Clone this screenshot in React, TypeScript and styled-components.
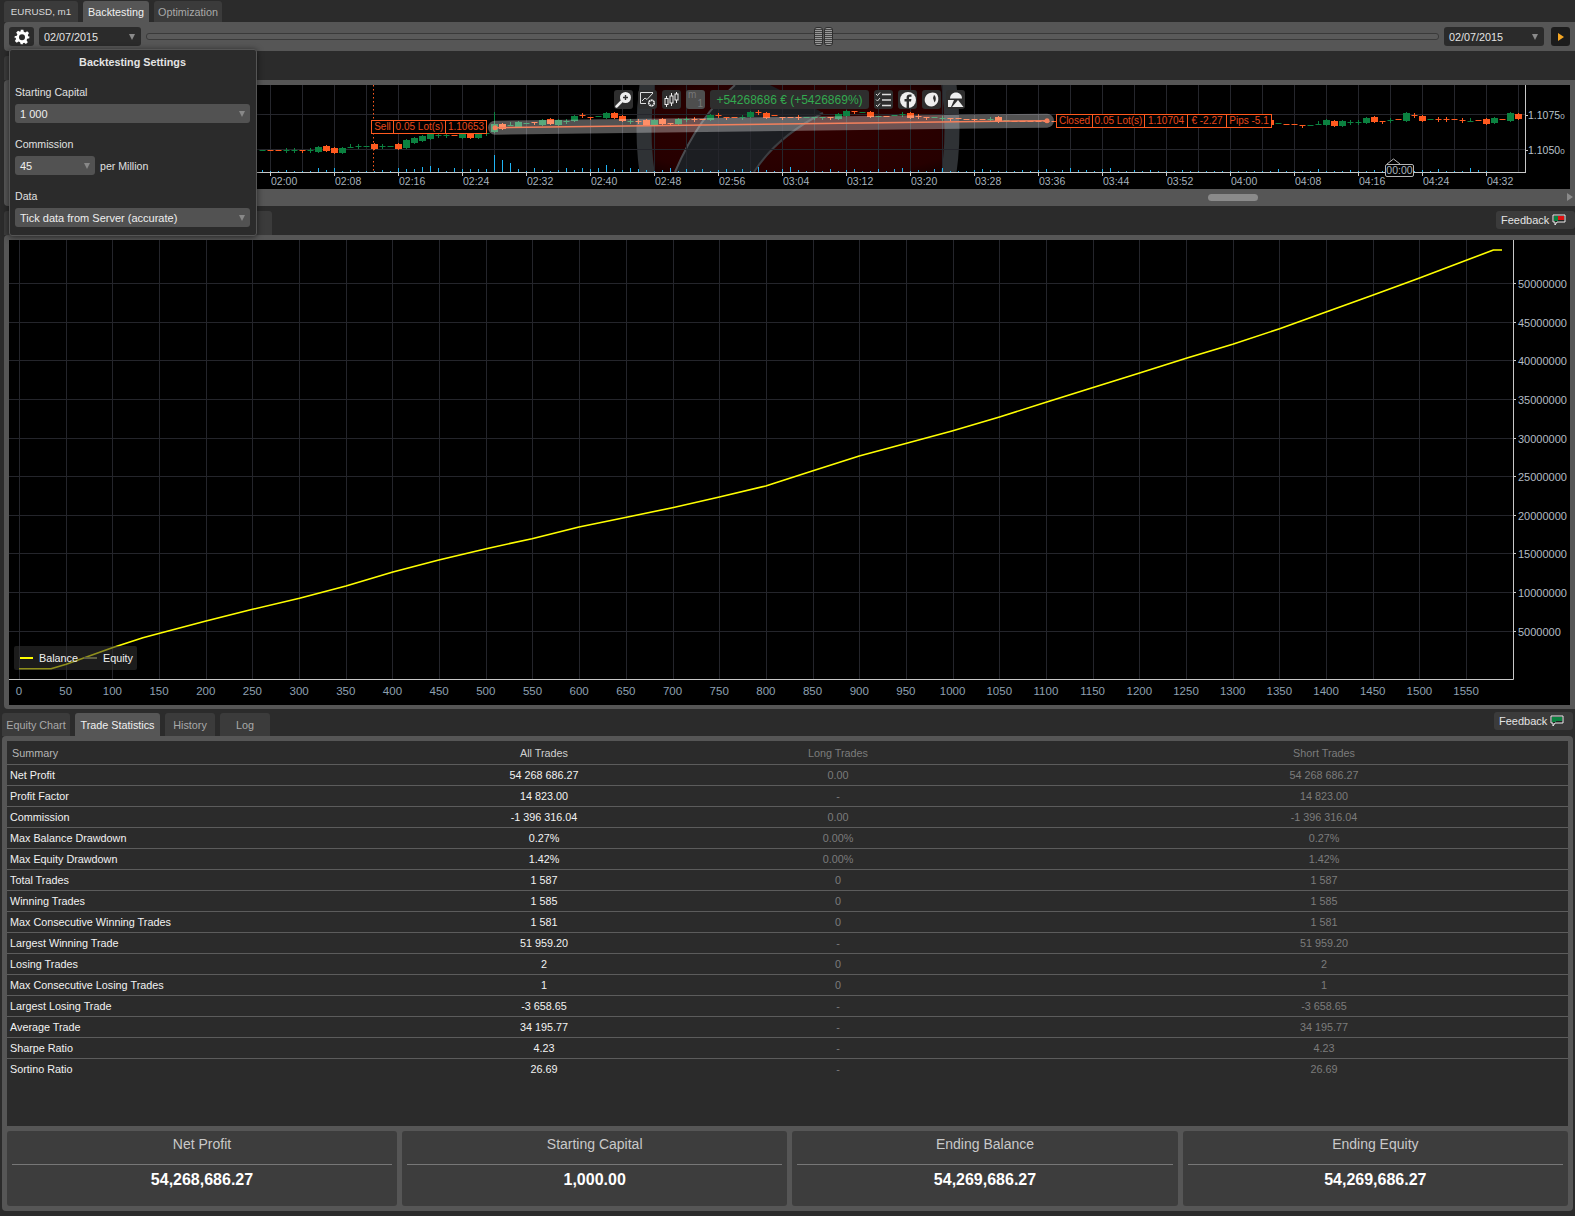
import React from "react";
import styled, { createGlobalStyle } from "styled-components";

const GREEN = "#0b8140";
const ORANGE = "#ff5a1f";

const seq = (start: number, items: string) =>
  items.split(" ").map((s, i) => ({
    x: 270.5 + 8 * (start + i),
    kind: s[0],
    color: s[1] === "g" ? GREEN : ORANGE,
    y: Number(s.slice(2)),
  }));

// kind: b box, t tall box, p plus, d dash, T tee, u up tee
const candles = [
  ...seq(-1, "dg150 do150 do150 pg150 pg150 To150 pg150 bg149 bo148 bo150 bg150 ug147 pg146 dg146 bo146 pg146 dg146 bo146 tg144 bg140 bg138 bg136 pg135 pg135 do135 bg135 bo135 bg135 pg133 tg128 bo126 ug125 bg124 dg123 To122 bg122"),
  ...seq(35, "bo121 bg122 pg121 bg118 po115 To117 dg116 bg115"),
  ...seq(43, "bo115 bo118 pg121 po121 bo122 bg122 bo121 To123 bg121 pg119 po119 do119 bg117 po115 To117 do117 pg117 bg114 po112 bo115 do115 To117 do117 po117 dg117 Tg117 Tg117 To117 bg116 bg113 To111 dg112 bo114 dg116 do116 dg115 pg114 bo115 po116 To117 dg117 pg118 To118 do118 do119 To119 do119 pg119 bo119 dg120 do121 do121 do121 do121 do121 do121"),
  ...seq(125, "bo122 dg123 do124 do124 To125 dg125 ug124 bg122 bo123 bg123 pg122 pg122 bg120 bo119 To121 pg120 do119 tg117 po115 bo118 dg119 po119 po119 do119 po120 ug121 do120 bo121 bg120 do119 tg117 bo116"),
];

const volumes = [
  2, 1, 1, 2, 1, 1, 1, 4, 2, 4, 1, 2, 1, 1, 1, 2, 1, 4, 3, 3, 5, 6, 4, 1, 4, 3, 3, 3, 3, 17, 12, 9, 3, 1, 4, 2, 1,
  2, 4, 2, 4, 3, 4, 7, 3, 2, 4, 3, 2, 1, 2, 4, 1, 3, 2, 3, 1, 2, 3, 2, 3, 1, 5, 2, 1, 3, 5, 2, 1, 1, 1, 3, 1, 2, 3, 1,
  1, 3, 1, 3, 4, 1, 2, 1, 3, 4, 1, 1, 1, 2, 3, 2, 1, 1, 1, 2, 1, 2, 3, 1, 2, 4, 2, 2, 1, 3, 4, 1, 1, 2, 1, 2, 1, 1, 1,
  2, 1, 1, 1, 1, 1, 1, 1, 1, 1, 1, 1, 3, 1, 1, 1, 1, 3, 1, 1, 1, 2, 1, 1, 2, 1, 1, 1, 4, 1, 2, 1, 3, 1, 1, 1, 4, 2, 1,
];

const miniTimes = [
  "02:00", "02:08", "02:16", "02:24", "02:32", "02:40", "02:48", "02:56", "03:04", "03:12",
  "03:20", "03:28", "03:36", "03:44", "03:52", "04:00", "04:08", "04:16", "04:24", "04:32",
];

const curve: [number, number][] = [
  [19, 668.7], [51, 668.7], [66.3, 664.3], [112.2, 647.7], [142.9, 637.7], [159.7, 633.3], [206, 621], [252.6, 609.3],
  [299.5, 598.3], [346, 586], [392.9, 572], [438.8, 560], [486.2, 548.7], [532, 538.7], [579, 527], [626.5, 517.3],
  [672.4, 507.7], [719.4, 497], [765.8, 486], [775, 483], [812.2, 471], [859.2, 456], [906.6, 443.3], [952, 431],
  [999.5, 417], [1046, 402.3], [1092.3, 387.7], [1138.8, 373.3], [1186.2, 358.3], [1232.7, 344.3], [1279.6, 328.7],
  [1326, 312], [1372.5, 295.3], [1418.9, 278.3], [1466.3, 260.3], [1493.4, 250], [1502, 250],
];

const stats: [string, string, string, string][] = [
  ["Net Profit", "54 268 686.27", "0.00", "54 268 686.27"],
  ["Profit Factor", "14 823.00", "-", "14 823.00"],
  ["Commission", "-1 396 316.04", "0.00", "-1 396 316.04"],
  ["Max Balance Drawdown", "0.27%", "0.00%", "0.27%"],
  ["Max Equity Drawdown", "1.42%", "0.00%", "1.42%"],
  ["Total Trades", "1 587", "0", "1 587"],
  ["Winning Trades", "1 585", "0", "1 585"],
  ["Max Consecutive Winning Trades", "1 581", "0", "1 581"],
  ["Largest Winning Trade", "51 959.20", "-", "51 959.20"],
  ["Losing Trades", "2", "0", "2"],
  ["Max Consecutive Losing Trades", "1", "0", "1"],
  ["Largest Losing Trade", "-3 658.65", "-", "-3 658.65"],
  ["Average Trade", "34 195.77", "-", "34 195.77"],
  ["Sharpe Ratio", "4.23", "-", "4.23"],
  ["Sortino Ratio", "26.69", "-", "26.69"],
];

const cards = [
  ["Net Profit", "54,268,686.27"],
  ["Starting Capital", "1,000.00"],
  ["Ending Balance", "54,269,686.27"],
  ["Ending Equity", "54,269,686.27"],
];

const GlobalStyle = createGlobalStyle`
  html, body {
    margin: 0;
    padding: 0;
    background: #2b2b2b;
  }
  * {
    box-sizing: border-box;
  }
  body {
    font-family: "Liberation Sans", Arial, sans-serif;
    font-size: 10.8px;
    color: #ddd;
  }
`;

const Page = styled.div`
  position: relative;
  width: 1575px;
  height: 1216px;
  overflow: hidden;
  background: #2b2b2b;
`;

const TabBar = styled.div<{ $h: number; $left: number; $right?: number }>`
  display: flex;
  align-items: flex-end;
  gap: 5px;
  height: ${(p) => p.$h}px;
  padding-left: ${(p) => p.$left}px;
  padding-right: ${(p) => p.$right || 0}px;
`;

const Tab = styled.div<{ $active?: boolean; $w: number; $h: number; $dim?: boolean; $small?: boolean }>`
  display: flex;
  align-items: center;
  justify-content: center;
  width: ${(p) => p.$w}px;
  height: ${(p) => p.$h}px;
  border-radius: 3px 3px 0 0;
  background: ${(p) => (p.$active ? "#565656" : "#3b3b3b")};
  color: ${(p) => (p.$active ? "#f0f0f0" : p.$dim ? "#a9a9a9" : "#d8d8d8")};
  font-size: ${(p) => (p.$small ? "9.8px" : "10.8px")};
`;

const Feedback = styled.div<{ $w: number }>`
  display: flex;
  align-items: center;
  gap: 3px;
  margin-left: auto;
  margin-bottom: 6px;
  width: ${(p) => p.$w}px;
  height: 18px;
  padding-left: 5px;
  border-radius: 3px;
  background: #3b3b3b;
  color: #e4e4e4;
  font-size: 11px;
`;

const Toolbar = styled.div`
  display: flex;
  align-items: center;
  height: 29px;
  margin-left: 4px;
  padding: 0 5px;
  border-radius: 4px 0 0 4px;
  background: #565656;
`;

const GearButton = styled.div`
  display: flex;
  align-items: center;
  justify-content: center;
  width: 25px;
  height: 19px;
  border-radius: 3px;
  background: #2b2b2b;
`;

const DateSelect = styled.div<{ $w: number }>`
  display: flex;
  align-items: center;
  justify-content: space-between;
  width: ${(p) => p.$w}px;
  height: 19px;
  margin-left: 5px;
  padding: 0 6px 0 5px;
  border-radius: 3px;
  background: #2b2b2b;
  color: #e4e4e4;
`;

const Caret = styled.span<{ $color?: string }>`
  width: 0;
  height: 0;
  border-left: 3px solid transparent;
  border-right: 3px solid transparent;
  border-top: 6px solid ${(p) => p.$color || "#8a8a8a"};
`;

const Track = styled.div`
  position: relative;
  flex: 1;
  height: 7px;
  margin-left: 5px;
  border: 1px solid #3a3a3a;
  border-radius: 3px;
  background: #5a5a5a;
`;

const Thumb = styled.div`
  position: absolute;
  left: 667px;
  top: -7px;
  display: flex;
  gap: 1px;
`;

const Grip = styled.div`
  width: 9px;
  height: 19px;
  border: 1px solid #2f2f2f;
  border-radius: 3px;
  background: repeating-linear-gradient(to bottom, #999 0 1px, #444 1px 2px);
`;

const PlayButton = styled.div`
  display: flex;
  align-items: center;
  justify-content: center;
  width: 19px;
  height: 19px;
  margin-left: 7px;
  border-radius: 3px;
  background: #1c1c1c;
`;

const PlayIcon = styled.span`
  width: 0;
  height: 0;
  border-top: 4px solid transparent;
  border-bottom: 4px solid transparent;
  border-left: 6px solid #f5a623;
`;

const ChartPanel = styled.div`
  position: relative;
  margin-left: 4px;
  padding: 5px 5px 0;
  border-radius: 4px 0 0 4px;
  background: #565656;
`;

const ChartSvg = styled.svg<{ $h: number }>`
  display: block;
  width: 1561px;
  height: ${(p) => p.$h}px;
  font-family: "Liberation Sans", Arial, sans-serif;
  background: #000;
`;

const ChartTools = styled.div`
  position: absolute;
  left: 610px;
  top: 10px;
  display: flex;
  gap: 5px;
`;

const ToolButton = styled.div<{ $muted?: boolean }>`
  position: relative;
  display: flex;
  align-items: center;
  justify-content: center;
  width: 19px;
  height: 19px;
  border-radius: 3px;
  background: ${(p) => (p.$muted ? "#4e4e4e" : "#2e2e2e")};
`;

const TimeframeM = styled.span`
  position: absolute;
  left: 2px;
  top: -1px;
  color: #777;
  font-size: 10px;
`;

const TimeframeN = styled.span`
  position: absolute;
  right: 2px;
  bottom: 0;
  color: #777;
  font-size: 10px;
`;

const PnlBox = styled.div`
  display: flex;
  align-items: center;
  justify-content: center;
  width: 159px;
  height: 19px;
  border-radius: 3px;
  background: #2e2e2e;
  color: #33a94f;
  font-size: 12px;
  white-space: nowrap;
`;

const TradeLabel = styled.div<{ $left: number; $top: number }>`
  position: absolute;
  left: ${(p) => p.$left}px;
  top: ${(p) => p.$top}px;
  display: flex;
  height: 14px;
  border: 1px solid ${ORANGE};
  background: #000;
  color: #e8481a;
  line-height: 12px;
  font-size: 10px;
`;

const TradeCell = styled.span<{ $w: number }>`
  width: ${(p) => p.$w}px;
  text-align: center;
  border-left: 1px solid ${ORANGE};
  &:first-child {
    border-left: 0;
  }
`;

const TimeTip = styled.div`
  position: absolute;
  left: 1381px;
  top: 84px;
  width: 29px;
  height: 13px;
  border: 1px solid #b5b5b5;
  border-radius: 2px;
  background: #000;
  color: #a9b4bd;
  line-height: 11px;
  font-size: 10.5px;
  text-align: center;
`;

const ScrollStrip = styled.div`
  position: relative;
  height: 17px;
`;

const ScrollThumb = styled.div`
  position: absolute;
  left: 1199px;
  top: 5px;
  width: 50px;
  height: 7px;
  border-radius: 4px;
  background: #8a8a8a;
`;

const ScrollArrow = styled.span`
  position: absolute;
  left: 1558px;
  top: 4px;
  border-top: 4px solid transparent;
  border-bottom: 4px solid transparent;
  border-left: 6px solid #8a8a8a;
`;

const EquityPanel = styled.div`
  position: relative;
  height: 474px;
  margin-left: 4px;
  padding: 5px 5px 0;
  border-radius: 4px 0 0 4px;
  background: #565656;
`;

const Legend = styled.div`
  position: absolute;
  left: 10px;
  top: 411px;
  display: flex;
  align-items: center;
  width: 123px;
  height: 24px;
  padding-left: 6px;
  border-radius: 2px;
  background: rgba(51, 51, 51, 0.55);
  color: #f0f0f0;
`;

const LegendLine = styled.span<{ $dim?: boolean }>`
  width: 13px;
  height: 2px;
  margin-right: 6px;
  background: ${(p) => (p.$dim ? "#5c5c44" : "#ffff00")};
`;

const LegendText = styled.span<{ $w: number }>`
  width: ${(p) => p.$w}px;
`;

const StatsPanel = styled.div`
  display: flex;
  flex-direction: column;
  gap: 5px;
  width: 1571px;
  height: 475px;
  margin-left: 2px;
  padding: 5px;
  border-radius: 4px;
  background: #565656;
`;

const Table = styled.div`
  height: 385px;
  background: #2b2b2b;
`;

const Row = styled.div<{ $h: number; $last?: boolean }>`
  display: grid;
  grid-template-columns: 485px 104px 484px 1fr;
  align-items: center;
  height: ${(p) => p.$h}px;
  border-bottom: 1px solid ${(p) => (p.$last ? "transparent" : "#5c5c5c")};
`;

const LabelCell = styled.div<{ $head?: boolean }>`
  padding-left: ${(p) => (p.$head ? 5 : 3)}px;
  color: ${(p) => (p.$head ? "#b5b5b5" : "#f2f2f2")};
`;

const ValueCell = styled.div<{ $muted?: boolean; $head?: boolean }>`
  text-align: center;
  white-space: nowrap;
  color: ${(p) => (p.$muted ? "#7c7c7c" : p.$head ? "#cfcfcf" : "#f2f2f2")};
`;

const Cards = styled.div`
  display: grid;
  grid-template-columns: 390px 1fr 1fr 1fr;
  gap: 5px;
  height: 75px;
`;

const Card = styled.div`
  padding: 0 5px;
  border-radius: 3px;
  background: #3d3d3d;
  text-align: center;
`;

const CardTitle = styled.div`
  height: 34px;
  border-bottom: 1px solid #777;
  color: #c9c9c9;
  font-size: 14px;
  line-height: 26px;
`;

const CardValue = styled.div`
  margin-top: 5px;
  color: #fff;
  font-size: 16px;
  font-weight: 700;
  line-height: 20px;
`;

const Popup = styled.div`
  position: absolute;
  left: 9px;
  top: 49px;
  width: 248px;
  height: 187px;
  padding: 0 6px 0 5px;
  border: 1px solid #555;
  border-radius: 3px;
  background: #2b2b2b;
  box-shadow: 0 1px 6px rgba(0, 0, 0, 0.6);
`;

const PopupTitle = styled.div`
  height: 32px;
  margin-bottom: 3px;
  color: #e4e4e4;
  font-weight: 700;
  line-height: 25px;
  text-align: center;
`;

const FieldLabel = styled.div`
  height: 19px;
  color: #e0e0e0;
  line-height: 14px;
  font-size: 10.6px;
`;

const Field = styled.div<{ $w?: number }>`
  display: flex;
  align-items: center;
  justify-content: space-between;
  width: ${(p) => (p.$w ? `${p.$w}px` : "100%")};
  height: 19px;
  padding: 0 5px;
  border-radius: 3px;
  background: #525252;
  color: #eee;
  font-size: 11px;
`;

const FieldRow = styled.div`
  display: flex;
  align-items: center;
  gap: 5px;
  color: #e0e0e0;
  font-size: 10.6px;
`;

const FieldGroup = styled.div`
  height: 52px;
`;

const GearIcon = () => (
  <svg width="16" height="16" viewBox="0 0 24 24" fill="#fff">
    <path d="M10 1h4l.7 3.2 2.2.9 2.8-1.8 2.8 2.8-1.8 2.8.9 2.2L23 11v3l-3.2.7-.9 2.2 1.8 2.8-2.8 2.8-2.8-1.8-2.2.9L14 23h-4l-.9-3.2-2.2-.9-2.8 1.8-2.8-2.8 1.8-2.8-.9-2.2L1 14v-3l3.2-.7.9-2.2L3.300 5.300 6.100 2.500l2.800 1.800 1.100-.9zM12 8a4.500 4.500 0 1 0 0 9 4.500 4.500 0 0 0 0-9z" fillRule="evenodd" />
  </svg>
);

const SpeechIcon = ({ fill }: { fill: string }) => (
  <svg width="14" height="12" viewBox="0 0 14 12">
    <path d="M1 1h12v7H5L3 11V8H1z" fill="#222" stroke="#eee" strokeWidth="1" />
    <rect x="2" y="2" width="4" height="5" fill={GREEN} />
    <rect x="6" y="2" width="6" height="4" fill={fill} />
  </svg>
);

const MagnifierIcon = () => (
  <svg width="17" height="17" viewBox="0 0 17 17">
    <circle cx="10.5" cy="6.5" r="5.5" fill="#eee" />
    <path d="M6.5 10.5 1.5 15.5" stroke="#eee" strokeWidth="2.5" strokeLinecap="round" />
    <path d="M10.5 4v5M8 6.5h5" stroke="#333" strokeWidth="1.4" />
  </svg>
);

const ChartSettingsIcon = () => (
  <svg width="17" height="17" viewBox="0 0 17 17" fill="none">
    <path d="M14 1.5H1.5v11H7" stroke="#ddd" />
    <path d="M3 10l3-3 2 1.5L14 2" stroke="#ddd" />
    <circle cx="12.5" cy="12" r="2.6" stroke="#eee" strokeWidth="1.6" strokeDasharray="1.5 .8" />
    <circle cx="12.5" cy="12" r="3.2" stroke="#eee" strokeWidth=".6" />
  </svg>
);

const CandlesIcon = () => (
  <svg width="17" height="17" viewBox="0 0 17 17" fill="none" stroke="#eee">
    <path d="M3.5 5v11M8.5 2v13M13.5 1v11" />
    <rect x="2" y="7.5" width="3" height="6" fill="#2e2e2e" />
    <rect x="7" y="5" width="3" height="7" fill="#2e2e2e" />
    <rect x="12" y="3" width="3" height="6" fill="#2e2e2e" />
  </svg>
);

const ChecklistIcon = () => (
  <svg width="17" height="17" viewBox="0 0 17 17" fill="none" stroke="#ddd">
    <path d="M1 3l1.5 1.5L5 1.5M1 8.5 2.5 10 5 7M1 14l1.5 1.5L5 12.5" />
    <path d="M7 3.5h9M7 9h9M7 14.5h9" strokeWidth="1.3" />
  </svg>
);

const FacebookIcon = () => (
  <svg width="16" height="16" viewBox="0 0 16 16">
    <circle cx="8" cy="8" r="8" fill="#eee" />
    <path d="M9 16V9.5h2l.4-2.4H9V6c0-.8.3-1.2 1.2-1.2h1.3V2.600C11 2.500 10.400 2.500 9.700 2.500 7.700 2.500 6.600 3.600 6.600 5.600v1.500H4.500v2.400h2.100V16z" fill="#2e2e2e" />
  </svg>
);

const HeadIcon = () => (
  <svg width="17" height="17" viewBox="0 0 17 17">
    <path d="M2 11C1 7 3 3 7 2c2-.8 6-.8 7.500 2 1.500 3 1 7-1 9-1 1-3 2.500-5 2.500C6 15.500 3 14 2 11z" fill="#eee" />
    <path d="M11 4c2 1 2.500 5 .5 7.500L10 7z" fill="#2e2e2e" />
  </svg>
);

const PeakIcon = () => (
  <svg width="17" height="17" viewBox="0 0 17 17">
    <path d="M3 7.500C3 4 5.500 1.500 9 1.500s6 2.500 6 6z" fill="#eee" />
    <path d="M1 16V9h6l-3 7z" fill="#eee" />
    <path d="M5 16l6-7 5.500 7z" fill="#eee" />
  </svg>
);

const CandleMark = ({ x, kind, color, y }: { x: number; kind: string; color: string; y: number }) => {
  if (kind === "b" || kind === "t") {
    const h = kind === "t" ? 8 : 5;
    const top = kind === "t" ? y - 4 : y - 2;
    return (
      <g fill={color}>
        <rect x={x - 3.5} y={top} width={7} height={h} />
        <rect x={x - 0.5} y={top - 1} width={1} height={h + 2} />
      </g>
    );
  }
  return (
    <g stroke={color} strokeWidth={1}>
      <path d={`M${x - 3} ${y + 0.5}h6`} />
      {kind === "p" && <path d={`M${x} ${y - 2}v5`} />}
      {kind === "T" && <path d={`M${x} ${y}v3`} />}
      {kind === "u" && <path d={`M${x} ${y}v-3`} />}
    </g>
  );
};

const MiniChart = () => {
  const gridX = Array.from({ length: 40 }, (_, i) => 270.5 + 32 * i).filter((x) => x < 1525);
  return (
    <ChartSvg $h={104} viewBox="9 85 1561 104">
      <defs>
        <radialGradient id="glow" cx="0.5" cy="0.5" r="0.7">
          <stop offset="0" stopColor="#300000" />
          <stop offset="0.8" stopColor="#260000" />
          <stop offset="1" stopColor="#120000" />
        </radialGradient>
      </defs>
      <rect x="640" y="85" width="315" height="88" fill="url(#glow)" />
      <path d="M675 172C692 132 712 105 735 85H770C790 95 810 105 823 113 790 130 768 150 754 172Z" fill="#1c1e22" />
      <path d="M675 172C692 132 712 105 735 85" stroke="#4a4c50" strokeWidth="2" fill="none" />
      <path d="M754 172C768 150 790 130 823 113" stroke="#3c3e42" strokeWidth="2" fill="none" />
      <ellipse cx="798" cy="129" rx="154" ry="220" fill="none" stroke="#2f3235" strokeWidth="15" />
      <rect x="620" y="172" width="360" height="17" fill="#000" />
      <g stroke="#25262c" strokeWidth="1">
        {gridX.map((x) => (
          <path key={x} d={`M${x} 85V172`} />
        ))}
        <path d="M9 114.5H1525M9 149.5H1525" />
      </g>
      <path d="M373.5 85V172" stroke={ORANGE} strokeDasharray="1.5 2.5" />
      <g fill="#1fb4f5">
        {volumes.map((h, i) => (
          <rect key={i} x={262 + 8 * i} y={172 - h} width={1} height={h} />
        ))}
      </g>
      <path d="M9 172.5H1525M1525.5 85V173" stroke="#c8c8c8" />
      {miniTimes.map((t, i) => (
        <g key={t}>
          <path d={`M${270.5 + 64 * i} 173v3`} stroke="#c8c8c8" />
          <text x={271 + 64 * i} y={185} fill="#a6b2bd" fontSize="10.5">
            {t}
          </text>
        </g>
      ))}
      <path d="M1525 115.5h3M1525 150.5h3" stroke="#c8c8c8" />
      <text x="1528" y="119" fill="#b9c2ca" fontSize="10.5">
        1.1075<tspan fontSize="8">0</tspan>
      </text>
      <text x="1528" y="154" fill="#b9c2ca" fontSize="10.5">
        1.1050<tspan fontSize="8">0</tspan>
      </text>
      {candles.map((c, i) => (
        <CandleMark key={i} {...c} />
      ))}
      <path d="M494.5 112V128" stroke={GREEN} />
      <path d="M495 127.7 1047 120.7" stroke="rgba(255,255,255,0.32)" strokeWidth="14" strokeLinecap="round" />
      <path d="M495 127.7 1047 120.7" stroke="#f4805c" strokeWidth="1.5" />
      <circle cx="495" cy="127.7" r="2.5" fill="#f4805c" />
      <circle cx="1047" cy="120.7" r="2.5" fill="#f4805c" />
      <path d="M1387 164l6.5-5 6.500 5" stroke="#b5b5b5" fill="#000" />
    </ChartSvg>
  );
};

const EquityChart = () => {
  const unit = 46.68;
  const xs = Array.from({ length: 32 }, (_, i) => i);
  const ys = Array.from({ length: 10 }, (_, i) => i + 1);
  const yOf = (i: number) => 630.5 - (i - 1) * 38.6;
  const points = curve.map(([x, y]) => `${x},${y}`).join(" ");
  return (
    <ChartSvg $h={465} viewBox="9 240 1561 465">
      <g stroke="#24252b" strokeWidth="1">
        {xs.map((i) => (
          <path key={i} d={`M${Math.round(19 + unit * i) + 0.5} 240V679`} />
        ))}
        {ys.map((i) => (
          <path key={i} d={`M9 ${Math.round(yOf(i)) + 0.5}H1513`} />
        ))}
      </g>
      <polyline points={points} fill="none" stroke="#ffff00" strokeWidth="1.6" strokeLinejoin="round" />
      <path d="M9 679.5H1513.5V240" fill="none" stroke="#c8c8c8" />
      {ys.map((i) => (
        <g key={i}>
          <path d={`M1513 ${Math.round(yOf(i)) + 0.5}h3`} stroke="#c8c8c8" />
          <text x="1518" y={Math.round(yOf(i)) + 5} fill="#b4bcc4" fontSize="11">
            {i * 5000000}
          </text>
        </g>
      ))}
      {xs.map((i) => (
        <text key={i} x={19 + unit * i} y={694.5} fill="#8ea0b2" fontSize="11.5" textAnchor="middle">
          {i * 50}
        </text>
      ))}
    </ChartSvg>
  );
};

export default function App() {
  return (
    <Page>
      <GlobalStyle />
      <TabBar $h={22} $left={4}>
        <Tab $w={74} $h={21} $small>EURUSD, m1</Tab>
        <Tab $w={66} $h={21} $active>Backtesting</Tab>
        <Tab $w={68} $h={21} $dim>Optimization</Tab>
      </TabBar>

      <Toolbar>
        <GearButton>
          <GearIcon />
        </GearButton>
        <DateSelect $w={102}>
          02/07/2015
          <Caret />
        </DateSelect>
        <Track>
          <Thumb>
            <Grip />
            <Grip />
          </Thumb>
        </Track>
        <DateSelect $w={100}>
          02/07/2015
          <Caret />
        </DateSelect>
        <PlayButton>
          <PlayIcon />
        </PlayButton>
      </Toolbar>

      <TabBar $h={29} $left={4}>
        <Tab $w={60} $h={24} />
      </TabBar>

      <ChartPanel>
        <MiniChart />
        <ChartTools>
          <ToolButton><MagnifierIcon /></ToolButton>
          <ToolButton><ChartSettingsIcon /></ToolButton>
          <ToolButton><CandlesIcon /></ToolButton>
          <ToolButton $muted>
            <TimeframeM>m</TimeframeM>
            <TimeframeN>1</TimeframeN>
          </ToolButton>
          <PnlBox>+54268686 € (+5426869%)</PnlBox>
          <ToolButton><ChecklistIcon /></ToolButton>
          <ToolButton><FacebookIcon /></ToolButton>
          <ToolButton><HeadIcon /></ToolButton>
          <ToolButton><PeakIcon /></ToolButton>
        </ChartTools>
        <TradeLabel $left={367} $top={40}>
          <TradeCell $w={21}>Sell</TradeCell>
          <TradeCell $w={52}>0.05 Lot(s)</TradeCell>
          <TradeCell $w={41}>1.10653</TradeCell>
        </TradeLabel>
        <TradeLabel $left={1052} $top={34}>
          <TradeCell $w={35}>Closed</TradeCell>
          <TradeCell $w={52}>0.05 Lot(s)</TradeCell>
          <TradeCell $w={43}>1.10704</TradeCell>
          <TradeCell $w={39}>€ -2.27</TradeCell>
          <TradeCell $w={45}>Pips -5.1</TradeCell>
        </TradeLabel>
        <TimeTip>00:00</TimeTip>
        <ScrollStrip>
          <ScrollThumb />
          <ScrollArrow />
        </ScrollStrip>
      </ChartPanel>

      <TabBar $h={29} $left={4}>
        <Tab $w={268} $h={24} />
        <Feedback $w={79}>
          Feedback
          <SpeechIcon fill="#e01010" />
        </Feedback>
      </TabBar>

      <EquityPanel>
        <EquityChart />
        <Legend>
          <LegendLine />
          <LegendText $w={45}>Balance</LegendText>
          <LegendLine $dim />
          <LegendText $w={34}>Equity</LegendText>
        </Legend>
      </EquityPanel>

      <TabBar $h={27} $left={2} $right={2}>
        <Tab $w={68} $h={23} $dim>Equity Chart</Tab>
        <Tab $w={85} $h={23} $active>Trade Statistics</Tab>
        <Tab $w={50} $h={23} $dim>History</Tab>
        <Tab $w={50} $h={23} $dim>Log</Tab>
        <Feedback $w={79}>
          Feedback
          <SpeechIcon fill={GREEN} />
        </Feedback>
      </TabBar>

      <StatsPanel>
        <Table>
          <Row $h={24}>
            <LabelCell $head>Summary</LabelCell>
            <ValueCell $head>All Trades</ValueCell>
            <ValueCell $muted>Long Trades</ValueCell>
            <ValueCell $muted>Short Trades</ValueCell>
          </Row>
          {stats.map(([label, all, long, short], i) => (
            <Row key={label} $h={21} $last={i === stats.length - 1}>
              <LabelCell>{label}</LabelCell>
              <ValueCell>{all}</ValueCell>
              <ValueCell $muted>{long}</ValueCell>
              <ValueCell $muted>{short}</ValueCell>
            </Row>
          ))}
        </Table>
        <Cards>
          {cards.map(([title, value]) => (
            <Card key={title}>
              <CardTitle>{title}</CardTitle>
              <CardValue>{value}</CardValue>
            </Card>
          ))}
        </Cards>
      </StatsPanel>

      <Popup>
        <PopupTitle>Backtesting Settings</PopupTitle>
        <FieldGroup>
          <FieldLabel>Starting Capital</FieldLabel>
          <Field>
            1 000
            <Caret $color="#888" />
          </Field>
        </FieldGroup>
        <FieldGroup>
          <FieldLabel>Commission</FieldLabel>
          <FieldRow>
            <Field $w={80}>
              45
              <Caret $color="#888" />
            </Field>
            per Million
          </FieldRow>
        </FieldGroup>
        <FieldGroup>
          <FieldLabel>Data</FieldLabel>
          <Field>
            Tick data from Server (accurate)
            <Caret $color="#888" />
          </Field>
        </FieldGroup>
      </Popup>
    </Page>
  );
}
